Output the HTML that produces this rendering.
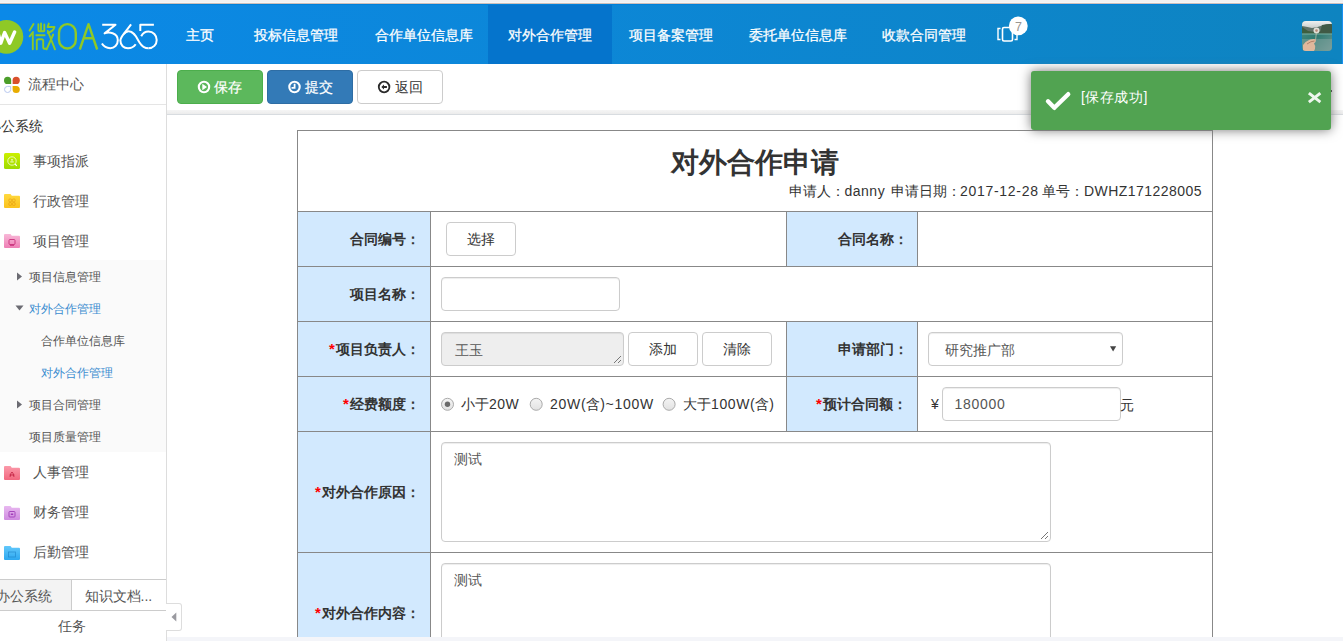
<!DOCTYPE html>
<html><head><meta charset="utf-8">
<style>
*{box-sizing:border-box;margin:0;padding:0}
html,body{width:1343px;height:641px;overflow:hidden;background:#fff;font-family:"Liberation Sans",sans-serif;font-size:14px;color:#333}
.a{position:absolute;white-space:nowrap}
#topstrip{position:absolute;left:0;top:0;width:1343px;height:5px;background:linear-gradient(#f1f1f1 0,#f1f1f1 2px,#f5f5f5 2px,#f5f5f5 3px,#cbbfbb 3px,#cbbfbb 4px,#0080da 4px)}
#hdr{position:absolute;left:0;top:5px;width:1343px;height:59px;background:linear-gradient(90deg,#0b89e8,#0e84c0)}
.nav{position:absolute;top:25px;line-height:20px;color:#fff;font-size:14px;-webkit-text-stroke:.25px #fff}
#act{position:absolute;left:488px;top:5px;width:124px;height:59px;background:#0574cc}
#side{position:absolute;left:0;top:64px;width:166px;height:577px;background:#fff}
#sideb{position:absolute;left:166px;top:64px;width:1px;height:577px;background:#ddd}
.s1{position:absolute;font-size:14px;line-height:20px;color:#555}
.s2{position:absolute;font-size:12px;line-height:16px;color:#555}
.btn{position:absolute;top:70px;height:34px;border-radius:4px;border:1px solid}
.lbl{position:absolute;background:#d2e9fe}
.hl{position:absolute;background:#888;height:1px}
.vl{position:absolute;background:#888;width:1px}
.lt{position:absolute;font-weight:bold;font-size:14px;line-height:20px;color:#333}
.star{color:#f00;letter-spacing:1.6px;font-size:15px}
.ctl{position:absolute;border:1px solid #ccc;border-radius:4px;background:#fff}
.fc{box-shadow:inset 0 1px 1px rgba(0,0,0,.075)}
.txt{position:absolute;font-size:14px;line-height:20px;color:#555}
</style></head><body>
<div id="topstrip"></div>
<div id="hdr"></div>
<div id="act"></div>
<!-- logo -->
<svg class="a" style="left:0;top:15px" width="170" height="45" viewBox="0 15 170 45">
<circle cx="6.4" cy="36.8" r="16.9" fill="#8fc926"/>
<polyline points="-2.5,31 0.8,43.2 4.6,32.5 9.6,43.2 14.6,32" fill="none" stroke="#fff" stroke-width="3.4" stroke-linejoin="round" stroke-linecap="round"/>
<g stroke="#8fc926" stroke-width="1.9" fill="none" stroke-linecap="round" stroke-linejoin="round">
<path d="M33.5,24 L29.6,30.4 M33,32 L29.6,36.3 M32.8,32.5 V49.3"/>
<path d="M38.4,24.2 V30.6 Q38.4,31.2 39,31.2 H43.8 Q44.3,31.2 44.3,30.6 V24.5 M41,23.5 V31"/>
<path d="M36.3,35.3 H44.6"/>
<path d="M36.8,49.3 V41 Q36.8,39.2 38.6,39.2 H41.5 Q43.2,39.2 43.2,41 V47.5 Q43.2,48.8 44.5,48.8 H46"/>
<path d="M48.8,23.6 L47.6,27 H54.5 Q53.6,31 47.8,33 M47.8,31 L55,49.3 M53.2,34.5 L46.6,49.3"/>
</g>
<g stroke="#8fc926" stroke-width="2.4" fill="none" stroke-linejoin="round">
<rect x="59" y="24.1" width="16.8" height="24.4" rx="8.4" ry="8.8"/>
<path d="M79.8,49.5 L88.5,24.2 L97.2,49.5 M83.6,38.2 H93.4"/>
</g>
<g stroke="#fff" stroke-width="2" fill="none" stroke-linecap="butt" stroke-linejoin="round">
<path d="M102.2,24.8 H115.5 L104.6,33.4 C108.5,31.9 117.8,32.2 117.8,40.2 C117.8,45.2 114.3,48.2 110.2,48.2 C106.6,48.2 103.6,46.4 101.9,43.6"/>
<path d="M131.1,24.3 L123.6,34.2 C121.5,37 120.4,38.5 120.4,40.6 C120.4,45.3 123.8,48.3 128,48.3 C131.2,48.3 134,46.8 135.7,44.3"/>
<path d="M123.6,34.2 C125.3,32.3 127.1,31.3 128.6,31.3 C134.5,31.3 136.8,38.5 139.5,42.5 C141.5,45.8 144.5,48.3 148.5,48.3"/>
<path d="M141.2,36.2 C142.8,33.2 145.5,31.5 148.5,31.5 C153.2,31.5 156.7,35.3 156.7,40 C156.7,44.6 153.2,48.3 148.5,48.3"/>
<path d="M153.9,24.8 H140.3 V31"/>
</g>
</svg>
<!-- nav -->
<div class="nav" style="left:186px">主页</div>
<div class="nav" style="left:254px">投标信息管理</div>
<div class="nav" style="left:375px">合作单位信息库</div>
<div class="nav" style="left:508px">对外合作管理</div>
<div class="nav" style="left:628.5px">项目备案管理</div>
<div class="nav" style="left:748.5px">委托单位信息库</div>
<div class="nav" style="left:881.5px">收款合同管理</div>
<svg class="a" style="left:990px;top:12px" width="45" height="36" viewBox="990 12 45 36">
<path d="M1000.5,28.5 H998 V39.5 H1000.5" fill="none" stroke="#fff" stroke-width="1.4"/>
<path d="M1014.5,28.5 H1017 V39.5 H1014.5" fill="none" stroke="#fff" stroke-width="1.4"/>
<rect x="1002.5" y="27.5" width="10" height="13.5" rx="1.5" fill="none" stroke="#fff" stroke-width="1.6"/>
<circle cx="1018.3" cy="25.9" r="9.4" fill="#fff"/>
<text x="1018.5" y="31" font-family="Liberation Sans" font-size="12.5" fill="#9a9590" text-anchor="middle">7</text>
</svg>
<!-- avatar -->
<svg class="a" style="left:1302px;top:21px" width="30" height="30" viewBox="0 0 30 30">
<defs><clipPath id="avc"><rect width="30" height="30" rx="4"/></clipPath>
<linearGradient id="avs" x1="0" y1="0" x2="0" y2="1"><stop offset="0" stop-color="#eef0f0"/><stop offset="1" stop-color="#c4cac8"/></linearGradient>
<linearGradient id="avl" x1="0" y1="0" x2="1" y2="1"><stop offset="0" stop-color="#4f8f86"/><stop offset=".5" stop-color="#2f7a70"/><stop offset="1" stop-color="#6f9792"/></linearGradient>
<filter id="avb"><feGaussianBlur stdDeviation=".6"/></filter></defs>
<g clip-path="url(#avc)">
<rect width="30" height="30" fill="url(#avl)"/>
<rect y="18" width="30" height="12" fill="#86a6a2" opacity=".5"/>
<rect width="30" height="8" fill="url(#avs)"/>
<g filter="url(#avb)">
<path d="M0,5 Q6,6 10,7 Q16,6 20,4.5 Q26,2.5 30,3 V13 H0 Z" fill="#5f7268"/>
<path d="M0,6 Q3,8 6,10 Q12,11 16,11 Q22,9 30,8 V13 H0 Z" fill="#3e5e40"/>
<path d="M20,4 Q26,2.5 30,3 V12 H18 Z" fill="#3f5a44"/>
<rect y="12" width="30" height="2" fill="#6ea69c" opacity=".6"/>
<circle cx="14.5" cy="9.5" r="3" fill="#f0ece4" opacity=".9"/><circle cx="14.5" cy="9.6" r="1.3" fill="#b88a78"/>
</g>
<path d="M14.3,12.5 L13.6,18.5" stroke="#cfc6ae" stroke-width=".7"/>
<g filter="url(#avb)">
<path d="M1,30 V24 Q4,20 8,18.5 Q12,17.5 14,18.5 Q14.2,21 12,22.5 Q14,25 13,28 L12,30 Z" fill="#e0b89c"/>
<path d="M5,23 Q9,20 12.5,20" stroke="#a8725a" stroke-width=".8" fill="none"/>
</g>
</g>
</svg>
<div class="a" style="left:1331px;top:90px;width:1px;height:2px;background:#333"></div>
<div style="position:absolute;left:1342px;top:5px;width:1px;height:59px;background:#1a90f0"></div>

<!-- sidebar -->
<div id="side"></div>
<div id="sideb"></div>
<svg class="a" style="left:0;top:70px" width="26" height="30" viewBox="0 70 26 30">
<path d="M11.2,84 H7.6 A3.6,3.6 0 0 1 4,80.4 A3.6,3.6 0 0 1 7.6,76.8 A3.6,3.6 0 0 1 11.2,80.4 Z" fill="#4c9e2a"/>
<path d="M12.6,84 V80.4 A3.6,3.6 0 0 1 16.2,76.8 A3.6,3.6 0 0 1 19.8,80.4 A3.6,3.6 0 0 1 16.2,84 Z" fill="#d9502c"/>
<path d="M10.7,86.4 V89.4 A3.1,3.1 0 0 1 7.6,92.5 A3.1,3.1 0 0 1 4.5,89.4 A3.1,3.1 0 0 1 7.6,86.4 Z" fill="none" stroke="#b8c8f0" stroke-width="1"/>
<path d="M12.6,85.9 H16.2 A3.6,3.6 0 0 1 19.8,89.5 A3.6,3.6 0 0 1 16.2,93.1 A3.6,3.6 0 0 1 12.6,89.5 Z" fill="#e8ac00"/>
</svg>
<div class="s1" style="left:28px;top:74px;color:#555">流程中心</div>
<div class="a" style="left:0;top:104px;width:166px;height:1px;background:#e5e5e5"></div>
<div class="s1" style="left:-13px;top:116px;color:#333">办公系统</div>
<svg class="a" style="left:4px;top:153px" width="16" height="16" viewBox="0 0 16 16">
<defs><linearGradient id="g1" x1="0" y1="0" x2="0" y2="1"><stop offset="0" stop-color="#ccf000"/><stop offset="1" stop-color="#9edb00"/></linearGradient></defs>
<rect width="16" height="16" rx="1.5" fill="url(#g1)"/>
<circle cx="8" cy="8" r="4.2" fill="none" stroke="#fff" stroke-width=".9" opacity=".8"/>
<circle cx="8" cy="6.8" r=".9" fill="#fff" opacity=".8"/><rect x="6.3" y="8.3" width="3.4" height="1.2" fill="#fff" opacity=".7"/>
<path d="M11,11 L12.8,12.8" stroke="#fff" stroke-width="1.1"/>
</svg>
<div class="s1" style="left:32.5px;top:151px">事项指派</div>
<svg class="a" style="left:4px;top:193px" width="16" height="16" viewBox="0 0 16 16">
<defs><linearGradient id="g2" x1="0" y1="0" x2="0" y2="1"><stop offset="0" stop-color="#ffd93e"/><stop offset="1" stop-color="#fbc21e"/></linearGradient></defs>
<path d="M0,2 Q0,1 1,1 H6.5 L7.8,2.8 H15 Q16,2.8 16,3.8 V14 Q16,15 15,15 H1 Q0,15 0,14 Z" fill="url(#g2)"/>
<g fill="none" stroke="#e39a12" stroke-width=".8" opacity=".8"><rect x="4.8" y="6" width="2.8" height="2.8" rx="1"/><rect x="8.4" y="6" width="2.8" height="2.8" rx="1"/><rect x="4.8" y="9.6" width="2.8" height="2.8" rx="1"/><rect x="8.4" y="9.6" width="2.8" height="2.8" rx="1"/></g>
</svg>
<div class="s1" style="left:32.5px;top:191px">行政管理</div>
<svg class="a" style="left:4px;top:233px" width="16" height="16" viewBox="0 0 16 16">
<defs><linearGradient id="g3" x1="0" y1="0" x2="0" y2="1"><stop offset="0" stop-color="#f8b8d8"/><stop offset="1" stop-color="#ee7fb5"/></linearGradient></defs>
<path d="M0,2 Q0,1 1,1 H6.5 L7.8,2.8 H15 Q16,2.8 16,3.8 V14 Q16,15 15,15 H1 Q0,15 0,14 Z" fill="url(#g3)"/>
<rect x="5" y="6.5" width="6" height="5" rx="1" fill="none" stroke="#c8307a" stroke-width=".9"/><path d="M6,12.5 H10" stroke="#c8307a" stroke-width=".8"/>
</svg>
<div class="s1" style="left:32.5px;top:231px">项目管理</div>
<div class="a" style="left:0;top:260px;width:166px;height:192px;background:#fafafa"></div>
<svg class="a" style="left:15px;top:270px" width="10" height="150" viewBox="15 270 10 150">
<path d="M17,272.5 L22,276.5 L17,280.5 Z" fill="#6b6b72"/>
<path d="M15.5,305.5 H23.5 L19.5,310.5 Z" fill="#6b6b72"/>
<path d="M17,400.5 L22,404.5 L17,408.5 Z" fill="#6b6b72"/>
</svg>
<div class="s2" style="left:29px;top:268.5px">项目信息管理</div>
<div class="s2" style="left:29px;top:301px;color:#3c8dd0">对外合作管理</div>
<div class="s2" style="left:41px;top:333px">合作单位信息库</div>
<div class="s2" style="left:41px;top:365px;color:#3c8dd0">对外合作管理</div>
<div class="s2" style="left:29px;top:397px">项目合同管理</div>
<div class="s2" style="left:29px;top:429px">项目质量管理</div>
<svg class="a" style="left:4px;top:465px" width="16" height="16" viewBox="0 0 16 16">
<defs><linearGradient id="g4" x1="0" y1="0" x2="0" y2="1"><stop offset="0" stop-color="#fb9aaa"/><stop offset="1" stop-color="#f2687f"/></linearGradient></defs>
<path d="M0,2 Q0,1 1,1 H6.5 L7.8,2.8 H15 Q16,2.8 16,3.8 V14 Q16,15 15,15 H1 Q0,15 0,14 Z" fill="url(#g4)"/>
<path d="M6,12 Q7,7 8,7 Q9,7 10,12 M5.5,10 H10.5" fill="none" stroke="#c02040" stroke-width=".8"/>
</svg>
<div class="s1" style="left:32.5px;top:462px">人事管理</div>
<svg class="a" style="left:4px;top:505px" width="16" height="16" viewBox="0 0 16 16">
<defs><linearGradient id="g5" x1="0" y1="0" x2="0" y2="1"><stop offset="0" stop-color="#e8b8f0"/><stop offset="1" stop-color="#cf8be0"/></linearGradient></defs>
<path d="M0,2 Q0,1 1,1 H6.5 L7.8,2.8 H15 Q16,2.8 16,3.8 V14 Q16,15 15,15 H1 Q0,15 0,14 Z" fill="url(#g5)"/>
<rect x="5" y="6.5" width="6" height="5.5" rx=".8" fill="none" stroke="#a03cb8" stroke-width=".9"/><rect x="6.8" y="8.5" width="2.4" height="1.5" fill="#a03cb8"/>
</svg>
<div class="s1" style="left:32.5px;top:502px">财务管理</div>
<svg class="a" style="left:4px;top:545px" width="16" height="16" viewBox="0 0 16 16">
<defs><linearGradient id="g6" x1="0" y1="0" x2="0" y2="1"><stop offset="0" stop-color="#62c8fb"/><stop offset="1" stop-color="#2da8f0"/></linearGradient></defs>
<path d="M0,2 Q0,1 1,1 H6.5 L7.8,2.8 H15 Q16,2.8 16,3.8 V14 Q16,15 15,15 H1 Q0,15 0,14 Z" fill="url(#g6)"/>
<rect x="4.5" y="7" width="7" height="5" fill="none" stroke="#1a80c8" stroke-width=".8" opacity=".7"/>
</svg>
<div class="s1" style="left:32.5px;top:542px">后勤管理</div>
<div class="a" style="left:0;top:579px;width:166px;height:1px;background:#ccc"></div>
<div class="a" style="left:0;top:580px;width:71px;height:30px;background:#f3f3f3"></div>
<div class="a" style="left:71px;top:580px;width:1px;height:30px;background:#ccc"></div>
<div class="a" style="left:0;top:610px;width:166px;height:1px;background:#ccc"></div>
<div class="s1" style="left:-4.5px;top:586px">办公系统</div>
<div class="s1" style="left:84.5px;top:586px">知识文档...</div>
<div class="s1" style="left:57.5px;top:616px">任务</div>
<div class="a" style="left:166px;top:603px;width:16px;height:28px;background:#fff;border:1px solid #ddd;border-left:none;border-radius:0 3px 3px 0"></div>
<svg class="a" style="left:170px;top:610px" width="10" height="14" viewBox="170 610 10 14"><path d="M176.3,612.5 V621.5 L171.5,617 Z" fill="#9a9aa0"/></svg>
<!-- content -->
<div class="a" style="left:167px;top:637px;width:1176px;height:4px;background:#f4f5f9"></div>
<div class="btn" style="left:177px;width:86px;background:#5cb85c;border-color:#4cae4c"></div>
<div class="btn" style="left:267px;width:86px;background:#337ab7;border-color:#2e6da4"></div>
<div class="btn" style="left:357px;width:86px;background:#fff;border-color:#ccc"></div>
<svg class="a" style="left:190px;top:75px" width="250" height="24" viewBox="190 75 250 24">
<circle cx="204" cy="87" r="5.2" fill="none" stroke="#fff" stroke-width="2.1"/><path d="M202.3,83.8 V90.2 L207,87 Z" fill="#fff"/>
<circle cx="294.5" cy="87" r="5.2" fill="none" stroke="#fff" stroke-width="2.1"/><path d="M294.6,83.8 V87.8 H291.5" fill="none" stroke="#fff" stroke-width="1.8"/>
<circle cx="384.1" cy="87" r="5.3" fill="none" stroke="#2a2a2a" stroke-width="1.8"/><path d="M381.3,87 L384,84.4 V86 H386.9 V88 H384 V89.6 Z" fill="#2a2a2a"/>
</svg>
<div class="a" style="left:214px;top:77px;line-height:20px;color:#fff;-webkit-text-stroke:.2px #fff">保存</div>
<div class="a" style="left:304.5px;top:77px;line-height:20px;color:#fff;-webkit-text-stroke:.2px #fff">提交</div>
<div class="a" style="left:394.5px;top:77px;line-height:20px;color:#333">返回</div>
<div class="a" style="left:167px;top:110px;width:1176px;height:4px;background:linear-gradient(#f5f5f5,#ececec)"></div>
<div class="a" style="left:167px;top:114px;width:1176px;height:1px;background:#d8dce0"></div>

<!-- table -->
<div class="lbl" style="left:298px;top:212px;width:132px;height:540px"></div>
<div class="lbl" style="left:787px;top:212px;width:130px;height:54px"></div>
<div class="lbl" style="left:787px;top:322px;width:130px;height:109px"></div>
<div class="hl" style="left:297px;top:130px;width:916px"></div>
<div class="hl" style="left:297px;top:211px;width:916px"></div>
<div class="hl" style="left:297px;top:266px;width:916px"></div>
<div class="hl" style="left:297px;top:321px;width:916px"></div>
<div class="hl" style="left:297px;top:376px;width:916px"></div>
<div class="hl" style="left:297px;top:431px;width:916px"></div>
<div class="hl" style="left:297px;top:552px;width:916px"></div>
<div class="vl" style="left:297px;top:130px;height:507px"></div>
<div class="vl" style="left:1212px;top:130px;height:507px"></div>
<div class="vl" style="left:430px;top:211px;height:426px"></div>
<div class="vl" style="left:786px;top:211px;height:55px"></div>
<div class="vl" style="left:917px;top:211px;height:55px"></div>
<div class="vl" style="left:786px;top:321px;height:110px"></div>
<div class="vl" style="left:917px;top:321px;height:110px"></div>

<div class="a" style="left:671px;top:143px;font-size:28px;line-height:40px;font-weight:bold;color:#333">对外合作申请</div>
<div class="a" style="left:789px;top:181px;font-size:14px;line-height:20px;color:#333">申请人：</div>
<div class="a lat" style="letter-spacing:.5px;left:844.5px;top:181px;font-size:14px;line-height:20px;color:#333">danny</div>
<div class="a" style="left:891px;top:181px;font-size:14px;line-height:20px;color:#333">申请日期：</div>
<div class="a lat" style="letter-spacing:.7px;left:960px;top:181px;font-size:14px;line-height:20px;color:#333">2017-12-28</div>
<div class="a" style="left:1042px;top:181px;font-size:14px;line-height:20px;color:#333">单号：</div>
<div class="a lat" style="letter-spacing:.45px;left:1084px;top:181px;font-size:14px;line-height:20px;color:#333">DWHZ171228005</div>

<div class="lt" style="left:350px;top:229px">合同编号：</div>
<div class="lt" style="left:838px;top:229px">合同名称：</div>
<div class="lt" style="left:350px;top:284px">项目名称：</div>
<div class="lt" style="left:329px;top:339px"><span class="star">*</span>项目负责人：</div>
<div class="lt" style="left:838px;top:339px">申请部门：</div>
<div class="lt" style="left:343px;top:394px"><span class="star">*</span>经费额度：</div>
<div class="lt" style="left:816px;top:394px"><span class="star">*</span>预计合同额：</div>
<div class="lt" style="left:315px;top:482px"><span class="star">*</span>对外合作原因：</div>
<div class="lt" style="left:315px;top:603px"><span class="star">*</span>对外合作内容：</div>

<div class="ctl" style="left:446px;top:222px;width:70px;height:34px"></div>
<div class="a" style="left:466.5px;top:229px;line-height:20px;color:#333">选择</div>
<div class="ctl fc" style="left:441px;top:277px;width:179px;height:34px"></div>
<div class="ctl fc" style="left:441px;top:332px;width:183px;height:34px;background:#eee"></div>
<svg class="a" style="left:612px;top:354px" width="10" height="10" viewBox="0 0 10 10"><path d="M9,2 L2,9 M9,6 L6,9" stroke="#777" stroke-width="1"/></svg>
<div class="a" style="left:454.5px;top:340px;line-height:20px;color:#555">王玉</div>
<div class="ctl" style="left:628px;top:332px;width:70px;height:34px"></div>
<div class="a" style="left:648.5px;top:339px;line-height:20px;color:#333">添加</div>
<div class="ctl" style="left:702px;top:332px;width:70px;height:34px"></div>
<div class="a" style="left:722.5px;top:339px;line-height:20px;color:#333">清除</div>
<div class="ctl fc" style="left:928px;top:332px;width:195px;height:34px"></div>
<div class="a" style="left:944.5px;top:340px;line-height:20px;color:#555">研究推广部</div>
<svg class="a" style="left:1108px;top:344px" width="10" height="10" viewBox="0 0 10 10"><path d="M2,2.3 H8.2 L5.1,7.6 Z" fill="#444"/></svg>

<svg class="a" style="left:440px;top:396px" width="240" height="16" viewBox="440 396 240 16">
<defs><linearGradient id="rg" x1="0" y1="0" x2="0" y2="1"><stop offset="0" stop-color="#f4f4f4"/><stop offset="1" stop-color="#e2e2e2"/></linearGradient></defs>
<circle cx="447.5" cy="404.3" r="6" fill="url(#rg)" stroke="#aaa" stroke-width="1"/><circle cx="447.5" cy="404.3" r="2.7" fill="#6a6a6a"/>
<circle cx="536.2" cy="404.3" r="6" fill="url(#rg)" stroke="#aaa" stroke-width="1"/>
<circle cx="669.1" cy="404.3" r="6" fill="url(#rg)" stroke="#aaa" stroke-width="1"/>
</svg>
<div class="a" style="left:461px;top:394px;line-height:20px;color:#333">小于<span style="letter-spacing:.5px">20W</span></div>
<div class="a" style="left:550px;top:394px;line-height:20px;color:#333"><span style="letter-spacing:.7px">20W(</span>含<span style="letter-spacing:.7px">)~100W</span></div>
<div class="a" style="left:683px;top:394px;line-height:20px;color:#333">大于<span style="letter-spacing:.6px">100W(</span>含)</div>

<div class="a" style="left:931px;top:394px;line-height:20px;color:#333">¥</div>
<div class="ctl fc" style="left:942px;top:387px;width:179px;height:34px"></div>
<div class="a" style="left:954.5px;top:394px;line-height:20px;color:#555;letter-spacing:.7px">180000</div>
<div class="a" style="left:1119.5px;top:395px;line-height:20px;color:#333">元</div>

<div class="ctl fc" style="left:441px;top:442px;width:610px;height:100px"></div>
<svg class="a" style="left:1039px;top:530px" width="10" height="10" viewBox="0 0 10 10"><path d="M9,2 L2,9 M9,6 L6,9" stroke="#777" stroke-width="1"/></svg>
<div class="a" style="left:454px;top:449px;line-height:20px;color:#555">测试</div>
<div class="ctl fc" style="left:441px;top:563px;width:610px;height:100px"></div>
<div class="a" style="left:454px;top:570px;line-height:20px;color:#555">测试</div>
<div class="a" style="left:167px;top:637px;width:1176px;height:4px;background:#f4f5f9"></div>

<!-- toast -->
<div class="a" style="left:1031px;top:71px;width:300px;height:59px;background:#51a351;border-radius:3px;box-shadow:0 0 12px #777"></div>
<svg class="a" style="left:1040px;top:85px" width="40" height="30" viewBox="1040 85 40 30"><path d="M1048,101.3 L1054.3,107.8 L1068.2,94.2" fill="none" stroke="#fff" stroke-width="4.4" stroke-linecap="round" stroke-linejoin="round"/></svg>
<div class="a" style="left:1081px;top:87px;line-height:20px;color:#fff;letter-spacing:.5px">[保存成功]</div>
<svg class="a" style="left:1305px;top:89px" width="18" height="17" viewBox="1305 89 18 17"><path d="M1310,94 L1319.2,101.2 M1319.2,94 L1310,101.2" stroke="#fff" stroke-width="2.9" stroke-linecap="square" opacity=".9"/></svg>
</body></html>
